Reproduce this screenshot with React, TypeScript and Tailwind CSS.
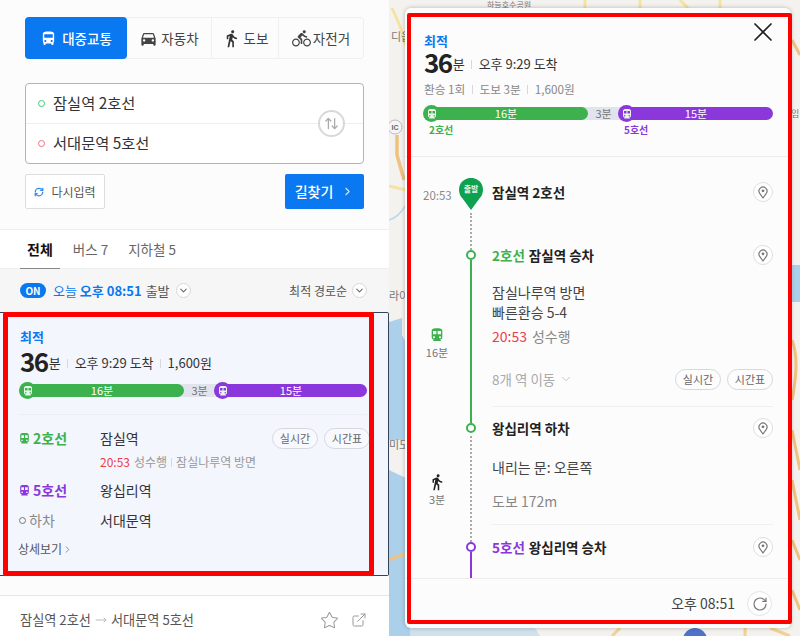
import { ArrowUpDown, ChevronDown, ChevronRight, ExternalLink, MoveRight, RefreshCw, RotateCw, Star, X } from "lucide-react"
import { MdDirectionsBike, MdDirectionsBus, MdDirectionsCar, MdDirectionsSubway, MdDirectionsWalk } from "react-icons/md"

const Sep = () => <span className="mx-[6.5px] inline-block h-[9px] w-px bg-[#d5d8dd]" />

function Segment({ width, color, label, icon }: { width: number; color: string; label: string; icon?: boolean }) {
  return (
    <div
      className={`relative flex h-[13px] shrink-0 items-center justify-center text-[11px] leading-none ${color} ${icon ? "rounded-full text-white" : "text-[#777]"}`}
      style={{ width }}
    >
      {icon && (
        <span className={`absolute -left-px top-[-2px] flex h-[17px] w-[17px] items-center justify-center rounded-full ${color}`}>
          <MdDirectionsSubway className="h-[12px] w-[12px] text-[#e8f5e8]" />
        </span>
      )}
      {label}
    </div>
  )
}

function RouteBar({ purple }: { purple: number }) {
  return (
    <div className="flex items-center">
      <Segment width={164} color="bg-[#3cb14e]" label="16분" icon />
      <div className="-mx-[6px] flex h-[13px] w-[43px] shrink-0 items-center justify-center bg-[#e1e4ec] text-[11px] text-[#777]">3분</div>
      <Segment width={purple} color="bg-[#8a38dc]" label="15분" icon />
    </div>
  )
}

function Pill({ children }: { children: string }) {
  return (
    <span className="flex h-[21px] w-[46px] shrink-0 items-center justify-center rounded-full border border-[#d6d8dc] bg-white/40 text-[11px] text-[#666]">
      {children}
    </span>
  )
}

function Place() {
  return (
    <span className="flex h-[20px] w-[20px] shrink-0 items-center justify-center rounded-full border border-[#dedede] bg-white">
      <svg width="10" height="13" viewBox="0 0 10 13" fill="none">
        <path d="M5 12 L1.7 7.4 A4 4 0 1 1 8.3 7.4 Z" stroke="#777" strokeWidth="1.2" strokeLinejoin="round" />
        <circle cx="5" cy="4.8" r="1.4" fill="#777" />
      </svg>
    </span>
  )
}

function CircleChevron() {
  return (
    <span className="flex h-[15px] w-[15px] items-center justify-center rounded-full border border-[#d8d8d8] bg-white">
      <ChevronDown className="h-[11px] w-[11px] text-[#666]" strokeWidth={2.2} />
    </span>
  )
}

function Sidebar() {
  return (
    <div className="flex h-[636px] w-[389px] shrink-0 flex-col bg-[#fcfcfc] shadow-[1px_0_3px_rgba(0,0,0,0.15)]">
      <div className="h-[229px] shrink-0 border-b-0 px-[25px] pt-[17px]">
        <div className="flex h-[42px] rounded-[4px] border border-[#f0f0f0] text-[13.5px] text-[#444]">
          <div className="-my-px -ml-px flex w-[102px] items-center justify-center gap-[5px] rounded-[4px] bg-[#0a78f0] font-medium text-white">
            <MdDirectionsBus className="h-[17px] w-[17px]" />
            대중교통
          </div>
          <div className="flex w-[85px] items-center justify-center gap-[3px] border-r border-[#f0f0f0]">
            <MdDirectionsCar className="h-[19px] w-[19px] text-[#444]" />
            자동차
          </div>
          <div className="flex w-[67px] items-center justify-center gap-[3px] border-r border-[#f0f0f0]">
            <MdDirectionsWalk className="h-[19px] w-[19px] text-[#333]" />
            도보
          </div>
          <div className="flex flex-1 items-center justify-center gap-[2px]">
            <MdDirectionsBike className="h-[19px] w-[19px] text-[#444]" />
            자전거
          </div>
        </div>

        <div className="relative mt-[24px] flex h-[81px] flex-col rounded-[4px] border border-[#b4b4b4] bg-white text-[15.3px] text-[#333]">
          <div className="flex h-[40px] items-center gap-[8px] border-b border-[#eeeeee] pb-[3px] pl-[12px]">
            <span className="mt-[2px] h-[7px] w-[7px] rounded-full border border-[#3dca78]" />
            잠실역 2호선
          </div>
          <div className="flex flex-1 items-center gap-[8px] pb-[3px] pl-[12px]">
            <span className="mt-[2px] h-[7px] w-[7px] rounded-full border border-[#ee6f86]" />
            서대문역 5호선
          </div>
          <span className="absolute left-[292px] top-[26px] flex h-[27px] w-[27px] items-center justify-center rounded-full border-2 border-[#d8d8d8] bg-white">
            <ArrowUpDown className="h-[15px] w-[15px] text-[#aaa]" strokeWidth={2} />
          </span>
        </div>

        <div className="mt-[10px] flex h-[35px] justify-between">
          <div className="flex w-[80px] items-center justify-center gap-[7px] rounded-[2px] border border-[#dddddd] bg-white text-[12px] text-[#555]">
            <RefreshCw className="h-[10px] w-[10px] text-[#2e8cf5]" strokeWidth={3} />
            다시입력
          </div>
          <div className="flex w-[79px] items-center justify-center gap-[8px] rounded-[2px] bg-[#0a78f0] text-[14px] font-medium text-white">
            길찾기
            <ChevronRight className="h-[13px] w-[13px] text-[#d5e8ff]" strokeWidth={2} />
          </div>
        </div>
      </div>

      <div className="flex h-[40px] shrink-0 items-center gap-[20px] border-y border-[#eeeeee] bg-white px-[27px] text-[13.5px] text-[#666]">
        <span className="relative flex h-full items-center text-[14px] font-bold text-[#111]">
          전체
          <span className="absolute -bottom-px -left-[7px] h-px w-[40px] bg-[#888]" />
        </span>
        <span>버스 7</span>
        <span>지하철 5</span>
      </div>

      <div className="flex h-[43px] shrink-0 items-center justify-between bg-[#f6f6f6] pl-[20px] pr-[22px]">
        <div className="flex items-center text-[13px] text-[#0a78f0]">
          <span className="mr-[7px] flex h-[15px] w-[26px] items-center justify-center rounded-full bg-[#0a78f0] text-[10px] font-bold text-white">ON</span>
          오늘&nbsp;
          <span className="font-bold">오후 08:51</span>
          <span className="ml-[4px] mr-[6px] text-[#555]">출발</span>
          <CircleChevron />
        </div>
        <div className="flex items-center gap-[5px] text-[12px] text-[#555]">
          최적 경로순
          <CircleChevron />
        </div>
      </div>

      <div className="h-[264px] shrink-0 overflow-hidden rounded-r-[2px] border-y border-r border-[#33445a] bg-[#f3f6fd] pl-[18px] pr-[21px]">
        <div className="ml-[2px] mt-[15px] text-[13px] font-bold leading-[18px] text-[#0a78f0]">최적</div>
        <div className="ml-[2px] mt-[2px] flex h-[26px] items-center text-[#333]">
          <span className="text-[26px] font-bold leading-none tracking-[-1.5px] text-[#222]">36</span>
          <span className="ml-[1px] mt-[4px] text-[13px]">분</span>
          <span className="mt-[4px] flex items-center text-[13px]">
            <Sep />오후 9:29 도착<Sep />1,600원
          </span>
        </div>
        <div className="ml-[2px] mt-[10px]">
          <RouteBar purple={152} />
        </div>
        <div className="mt-[17px] h-px bg-[#eceef3]" />

        <div className="mt-[13px] flex h-[21px] items-center text-[14px]">
          <MdDirectionsSubway className="h-[13px] w-[13px] text-[#3cb14e]" />
          <span className="ml-[2px] w-[67px] font-bold text-[#3cb14e]">2호선</span>
          <span className="text-[#333]">잠실역</span>
          <span className="ml-auto mr-[-3px] flex gap-[6px]">
            <Pill>실시간</Pill>
            <Pill>시간표</Pill>
          </span>
        </div>
        <div className="ml-[82px] mt-[3px] flex h-[20px] items-center text-[12px] text-[#999]">
          <span className="mr-[4px] text-[#ee3c48]">20:53</span>
          성수행
          <span className="mx-[4px] h-[9px] w-px bg-[#d5d8dd]" />
          잠실나루역 방면
        </div>
        <div className="mt-[8px] flex h-[20px] items-center text-[14px]">
          <MdDirectionsSubway className="h-[13px] w-[13px] text-[#8a38dc]" />
          <span className="ml-[2px] w-[67px] font-bold text-[#8a38dc]">5호선</span>
          <span className="text-[#333]">왕십리역</span>
        </div>
        <div className="mt-[10px] flex h-[20px] items-center text-[14px]">
          <span className="ml-px h-[7px] w-[7px] rounded-full border-[1.5px] border-[#777]" />
          <span className="ml-[3px] w-[71px] text-[#888]">하차</span>
          <span className="text-[#333]">서대문역</span>
        </div>
        <div className="mt-[10px] flex items-center text-[12px] text-[#555]">
          상세보기
          <ChevronRight className="h-[11px] w-[11px] text-[#888]" />
        </div>
      </div>

      <div className="mt-[19px] flex h-[41px] shrink-0 items-center justify-between border-t border-[#e6e6e6] bg-white pl-[20px] pr-[22px] text-[13.2px] text-[#555]">
        <span className="mt-[8px] flex items-center">
          잠실역 2호선
          <MoveRight className="mx-[4px] h-[12px] w-[12px] text-[#bbb]" />
          서대문역 5호선
        </span>
        <span className="mt-[8px] flex items-center gap-[12px] text-[#999]">
          <Star className="h-[19px] w-[19px]" strokeWidth={1.3} />
          <ExternalLink className="h-[16px] w-[16px]" strokeWidth={1.5} />
        </span>
      </div>
    </div>
  )
}

function StationTitle({ accent, accentClass, title }: { accent?: string; accentClass?: string; title: string }) {
  return (
    <div className="flex h-[10px] items-center justify-between text-[13.5px] font-bold text-[#222]">
      <span>
        {accent && <span className={`mr-[4px] ${accentClass}`}>{accent}</span>}
        {title}
      </span>
      <Place />
    </div>
  )
}

function Dotted() {
  return <span className="mt-[3px] w-0 flex-1 border-l-2 border-dotted border-[#aaaaaa]" />
}

function RailRing({ border }: { border: string }) {
  return <span className={`h-[10px] w-[10px] shrink-0 rounded-full border-2 bg-white ${border}`} />
}

function DetailPanel() {
  return (
    <div className="absolute left-[16px] top-[8px] flex h-[620px] w-[386px] flex-col overflow-hidden rounded-[6px] bg-[#fcfcfc] shadow-[0_0_4px_rgba(0,0,0,0.25)]">
      <div className="relative h-[149px] shrink-0 border-b border-[#ececec] pl-[19px] pr-[18px] pt-[24px]">
        <X className="absolute right-[12px] top-[8px] h-[32px] w-[32px] text-[#222]" strokeWidth={1.3} />
        <div className="text-[13px] font-bold leading-[18px] text-[#0a78f0]">최적</div>
        <div className="mt-[-1px] flex h-[26px] items-center text-[#333]">
          <span className="text-[26px] font-bold leading-none tracking-[-1.5px] text-[#222]">36</span>
          <span className="ml-[1px] mt-[4px] text-[13px]">분</span>
          <span className="mt-[4px] flex items-center text-[13px]">
            <Sep />오후 9:29 도착
          </span>
        </div>
        <div className="mt-[5px] flex h-[18px] items-center text-[11.7px] text-[#888]">
          환승 1회<Sep />도보 3분<Sep />1,600원
        </div>
        <div className="mt-[9px]">
          <RouteBar purple={154} />
        </div>
        <div className="mt-[2px] flex text-[10px] font-bold leading-[16px]">
          <span className="ml-[5px] w-[195px] text-[#3cb14e]">2호선</span>
          <span className="text-[#8a38dc]">5호선</span>
        </div>
      </div>

      <div className="flex-1 overflow-hidden">
        {/* 출발 */}
        <div className="flex h-[93px]">
          <div className="w-[56px] shrink-0 pl-[18px] pt-[31px] text-[11.5px] leading-[14px] text-[#888]">20:53</div>
          <div className="flex w-[20px] shrink-0 flex-col items-center pt-[21px]">
            <div className="relative h-[32px] w-[24px] shrink-0">
              <svg width="24" height="32" viewBox="0 0 24 32">
                <path d="M12 32 L3.6 20.4 A12 12 0 1 1 20.4 20.4 Z" fill="#0ea14f" />
              </svg>
              <span className="absolute left-0 right-0 top-[6px] text-center text-[8px] font-bold leading-[10px] text-[#e6f6ec]">출발</span>
            </div>
            <Dotted />
          </div>
          <div className="ml-[11px] flex-1 pr-[18px] pt-[30px]">
            <StationTitle title="잠실역 2호선" />
          </div>
        </div>

        {/* 2호선 */}
        <div className="flex h-[173px]">
          <div className="flex w-[56px] shrink-0 flex-col items-center pl-[8px] pt-[77px] text-[11px] text-[#777]">
            <MdDirectionsSubway className="h-[16px] w-[16px] text-[#3cb14e]" />
            <span className="mt-[1px] leading-[16px]">16분</span>
          </div>
          <div className="flex w-[20px] shrink-0 flex-col items-center">
            <RailRing border="border-[#3cb14e]" />
            <span className="w-[2px] flex-1 bg-[#3cb14e]" />
          </div>
          <div className="ml-[11px] flex-1 pr-[18px] text-[14px] text-[#444]">
            <StationTitle accent="2호선" accentClass="text-[#3cb14e]" title="잠실역 승차" />
            <div className="mt-[22px] leading-[20px]">잠실나루역 방면</div>
            <div className="leading-[20px]">빠른환승 5-4</div>
            <div className="mt-[4px] flex h-[20px] items-center text-[#888]">
              <span className="mr-[5px] text-[#ee3c48]">20:53</span>
              성수행
            </div>
            <div className="mt-[22px] flex h-[22px] items-center text-[13.5px] text-[#aaa]">
              8개 역 이동
              <ChevronDown className="ml-[4px] h-[14px] w-[14px] text-[#bbb]" strokeWidth={1.5} />
              <span className="ml-auto flex gap-[6px]">
                <Pill>실시간</Pill>
                <Pill>시간표</Pill>
              </span>
            </div>
            <div className="mt-[16px] h-px bg-[#f0f0f0]" />
          </div>
        </div>

        {/* 도보 */}
        <div className="flex h-[119px]">
          <div className="flex w-[56px] shrink-0 flex-col items-center pl-[8px] pt-[50px] text-[11px] text-[#777]">
            <MdDirectionsWalk className="h-[18px] w-[18px] text-[#222]" />
            <span className="leading-[16px]">3분</span>
          </div>
          <div className="flex w-[20px] shrink-0 flex-col items-center">
            <RailRing border="border-[#3cb14e]" />
            <Dotted />
          </div>
          <div className="ml-[11px] flex-1 pr-[18px] text-[14px] text-[#444]">
            <StationTitle title="왕십리역 하차" />
            <div className="mt-[24px] leading-[20px]">내리는 문: 오른쪽</div>
            <div className="mt-[14px] leading-[20px] text-[#888]">도보 172m</div>
            <div className="mt-[13px] h-px bg-[#f0f0f0]" />
          </div>
        </div>

        {/* 5호선 */}
        <div className="flex h-[37px]">
          <div className="w-[56px] shrink-0" />
          <div className="flex w-[20px] shrink-0 flex-col items-center">
            <RailRing border="border-[#8a38dc]" />
            <span className="w-[2px] flex-1 bg-[#8a38dc]" />
          </div>
          <div className="ml-[11px] flex-1 pr-[18px]">
            <StationTitle accent="5호선" accentClass="text-[#8a38dc]" title="왕십리역 승차" />
          </div>
        </div>
      </div>

      <div className="flex h-[50px] shrink-0 items-center justify-end gap-[12px] border-t border-[#ececec] pr-[19px] text-[14px] text-[#444]">
        오후 08:51
        <span className="flex h-[25px] w-[25px] items-center justify-center rounded-full border border-[#e4e4e4] bg-white">
          <RotateCw className="h-[16px] w-[16px] text-[#777]" strokeWidth={1.8} />
        </span>
      </div>
    </div>
  )
}

function MapBackground() {
  return (
    <svg className="absolute inset-0 h-full w-full" viewBox="389 0 411 636" preserveAspectRatio="none">
      <rect x="389" y="0" width="411" height="636" fill="#f3f2ef" />
      <path d="M389 322 L402 318 L402 335 L410 350 L410 440 L389 440 Z M389 470 L410 480 L410 636 L389 636 Z" fill="#acd0ea" />
      <path d="M389 636 L540 636 L535 628 L389 628 Z" fill="#acd0ea" opacity="0.5" />
      <path d="M792 265 H800 V302 H792 Z" fill="#acd0ea" />
      <path d="M392 8 L400 26 L406 46" stroke="#f6e3a0" strokeWidth="3" fill="none" />
      <path d="M397 135 L397 155 L404 180" stroke="#efc27f" strokeWidth="3.5" fill="none" />
      <path d="M389 186 L406 190" stroke="#f6e3a0" strokeWidth="3" fill="none" />
      <path d="M389 220 Q398 218 406 205" stroke="#b9d8ef" strokeWidth="1.5" fill="none" />
      <path d="M389 560 Q398 556 406 554" stroke="#efc27f" strokeWidth="3" fill="none" />
      <path d="M585 0 V8 M640 0 V8 M680 0 L688 8 M720 0 V8" stroke="#f6e3a0" strokeWidth="3" fill="none" />
      <path d="M792 40 L800 55 M792 340 Q800 360 792 400 M792 430 L800 470 M792 480 L800 520 M792 540 L800 560 M792 590 L800 610" stroke="#efc27f" strokeWidth="3" fill="none" />
      <path d="M620 628 L612 636 M745 628 V636 M770 628 L790 636" stroke="#f1d291" strokeWidth="3" fill="none" />
      <circle cx="695" cy="640" r="12" fill="#4d74c9" />
      <circle cx="395" cy="127" r="7" fill="#f5f5f5" stroke="#bbb" />
      <text x="395" y="130" textAnchor="middle" fontSize="7" fontWeight="700" fill="#666" fontFamily="Liberation Sans, sans-serif">IC</text>
      <text x="391" y="41" fontSize="11" fill="#777" fontFamily="'Noto Sans CJK KR', sans-serif">디읍</text>
      <text x="389" y="300" fontSize="11" fill="#777" fontFamily="'Noto Sans CJK KR', sans-serif">라이</text>
      <text x="389" y="449" fontSize="11" fill="#777" fontFamily="'Noto Sans CJK KR', sans-serif">미도</text>
      <text x="791" y="117" fontSize="9" fill="#777" fontFamily="'Noto Sans CJK KR', sans-serif">임</text>
      <text x="487" y="8" fontSize="8" fill="#777" fontFamily="'Noto Sans CJK KR', sans-serif">하늘호수공원</text>
    </svg>
  )
}

export default function App() {
  return (
    <div className="relative flex h-[636px] w-[800px] overflow-hidden font-['Noto_Sans_CJK_KR',sans-serif]">
      <Sidebar />
      <div className="relative flex-1">
        <MapBackground />
        <DetailPanel />
      </div>
      <div className="pointer-events-none absolute left-[3px] top-[312px] h-[264px] w-[371px] rounded-[2px] border-[5px] border-[#ff0000]" />
      <div className="pointer-events-none absolute left-[407px] top-[13px] h-[611px] w-[385px] rounded-[2px] border-[4px] border-[#ff0000]" />
    </div>
  )
}
